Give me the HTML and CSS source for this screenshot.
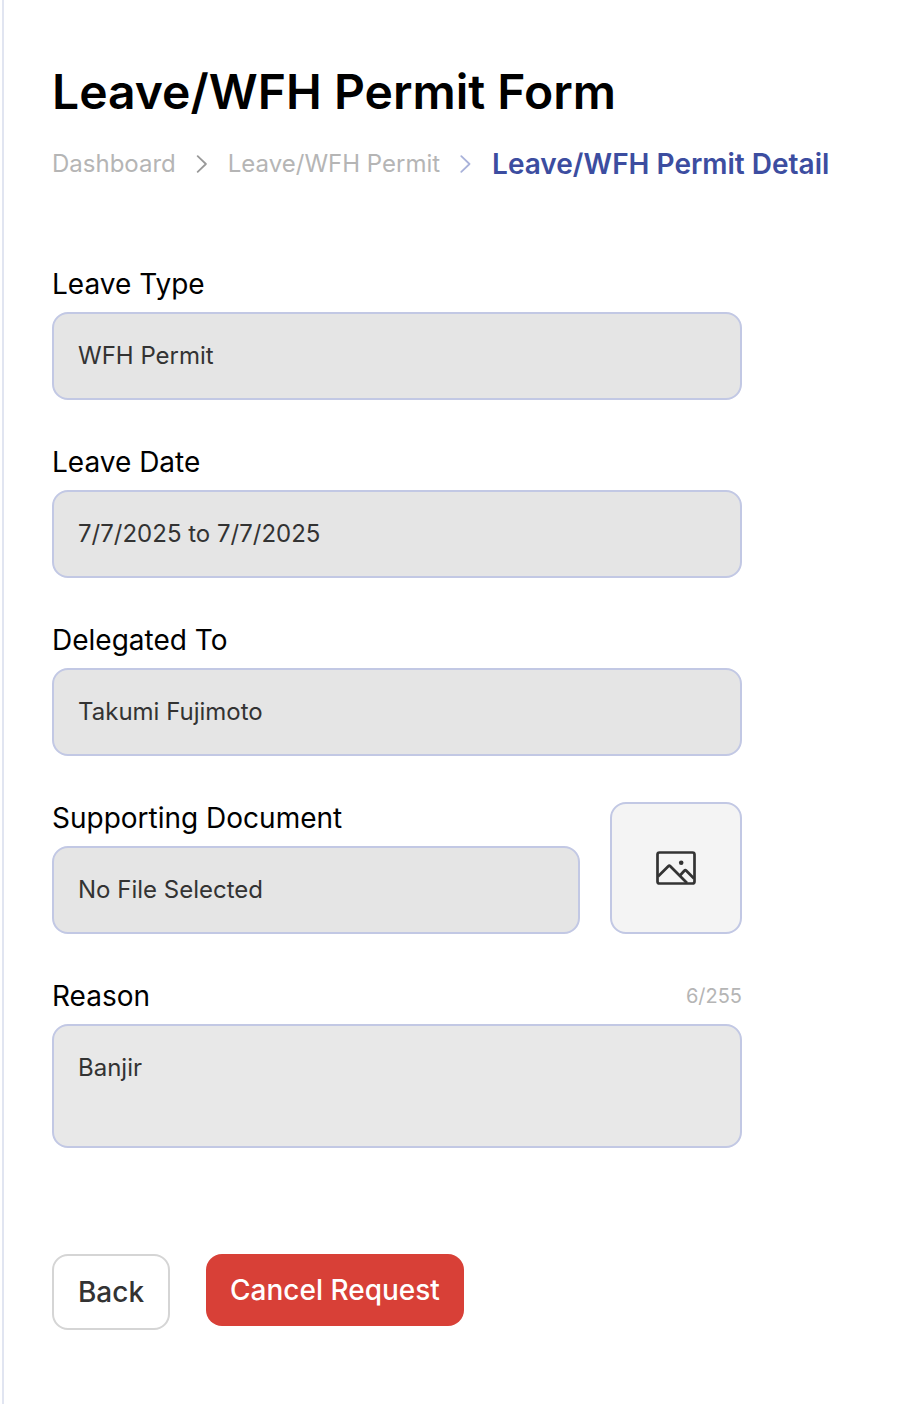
FILE: index.html
```html
<!DOCTYPE html>
<html lang="en">
<head>
<meta charset="utf-8">
<title>Leave/WFH Permit Form</title>
<link rel="stylesheet" href="styles.css">
</head>
<body>
<main class="page">
  <h1 class="title">Leave/WFH Permit Form</h1>
  <nav class="breadcrumb">
    <a class="crumb">Dashboard</a>
    <svg class="chevron" viewBox="0 0 12 18"><path d="M1.7 1.2l8.2 7.8-8.2 7.8"/></svg>
    <a class="crumb">Leave/WFH Permit</a>
    <svg class="chevron chevron-active" viewBox="0 0 12 18"><path d="M1.3 1.2l8.2 7.8-8.2 7.8"/></svg>
    <span class="crumb-current">Leave/WFH Permit Detail</span>
  </nav>
  <form class="form">
    <div class="field"><label class="label">Leave Type</label><div class="input">WFH Permit</div></div>
    <div class="field"><label class="label">Leave Date</label><div class="input">7/7/2025 to 7/7/2025</div></div>
    <div class="field"><label class="label">Delegated To</label><div class="input">Takumi Fujimoto</div></div>
    <div class="document-row">
      <div class="field document"><label class="label">Supporting Document</label><div class="input">No File Selected</div></div>
      <div class="preview">
        <svg class="image-icon" viewBox="0 0 40 34"><rect x="1.5" y="1.5" width="37" height="31" rx="2"/><path d="M2 25.5L12.3 15.2q1-1 2 0L31 32M24 24.5l4.3-4.7q1-1 2 0L38 27.5"/><circle cx="25.2" cy="11.7" r="2.3"/></svg>
      </div>
    </div>
    <div class="field"><div class="label-row"><label class="label">Reason</label><span class="counter">6/255</span></div><div class="input textarea">Banjir</div></div>
  </form>
  <div class="actions">
    <button class="button back">Back</button>
    <button class="button cancel">Cancel Request</button>
  </div>
</main>
</body>
</html>
```
FILE: styles.css
```css
* { box-sizing: border-box; }
body { margin: 0; background: #fff; font-family: Inter, sans-serif; color: #000; }
.page { height: 1404px; margin-left: 2px; border-left: 2px solid #e1e5f1; padding: 62px 0 0 48px; }
.title { margin: 0; font-size: 48px; line-height: 60px; font-weight: 600; white-space: nowrap; }
.breadcrumb { display: flex; align-items: center; height: 40px; margin-top: 22px; white-space: nowrap; }
.crumb { padding-bottom: 2px; font-size: 24px; color: #b5b5b5; }
.crumb-current { font-size: 28px; font-weight: 600; color: #3c4da0; }
.chevron { width: 12px; height: 18px; margin: 0 20px; fill: none; stroke: #999; stroke-width: 1.8; stroke-linecap: round; stroke-linejoin: round; }
.chevron-active { stroke: #a9b2da; }
.form { display: flex; flex-direction: column; gap: 46px; width: 690px; margin-top: 84px; }
.field { display: flex; flex-direction: column; gap: 10px; }
.label { height: 34px; font-size: 28px; line-height: 32px; }
.label-row { display: flex; justify-content: space-between; height: 34px; }
.counter { font-size: 20px; line-height: 32px; color: #b5b5b5; }
.input { height: 88px; border: 2px solid #c2c8e4; border-radius: 16px; padding: 24px; background: #e5e5e5; color: #333; font-size: 24px; line-height: 36px; }
.textarea { height: 124px; background: #e8e8e8; }
.document-row { display: flex; gap: 30px; }
.document { width: 528px; }
.preview { display: flex; align-items: center; justify-content: center; width: 132px; height: 132px; border: 2px solid #c2c8e4; border-radius: 16px; background: #f4f4f4; }
.image-icon { width: 40px; height: 34px; fill: none; stroke: #333; stroke-width: 2.7; }
.image-icon circle { fill: #333; stroke: none; }
.actions { display: flex; gap: 36px; margin-top: 106px; }
.button { border: 0; border-radius: 16px; padding: 0; font: 500 28px/34px Inter, sans-serif; }
.back { width: 118px; height: 76px; border: 2px solid #d5d5d5; background: #fff; color: #333; }
.cancel { width: 258px; height: 72px; background: #d84037; color: #fff; }
```
